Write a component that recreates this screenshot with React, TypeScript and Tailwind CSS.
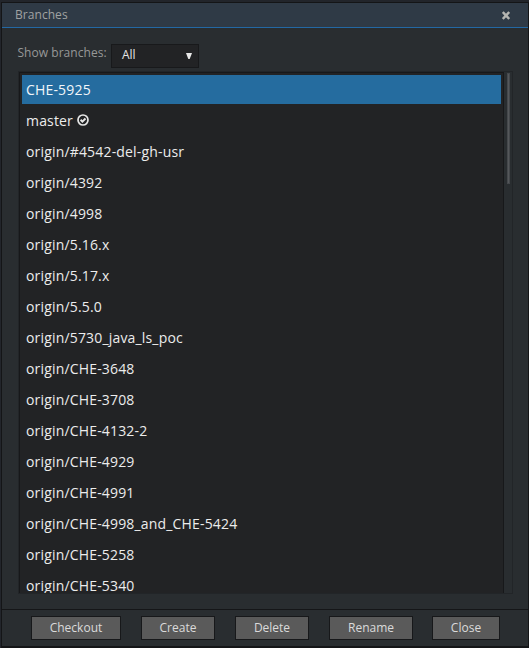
const branches = [
  'CHE-5925',
  'master',
  'origin/#4542-del-gh-usr',
  'origin/4392',
  'origin/4998',
  'origin/5.16.x',
  'origin/5.17.x',
  'origin/5.5.0',
  'origin/5730_java_ls_poc',
  'origin/CHE-3648',
  'origin/CHE-3708',
  'origin/CHE-4132-2',
  'origin/CHE-4929',
  'origin/CHE-4991',
  'origin/CHE-4998_and_CHE-5424',
  'origin/CHE-5258',
  'origin/CHE-5340',
];

const actions = [
  { label: 'Checkout', size: 'w-[90px] mr-5' },
  { label: 'Create', size: 'w-[74px] mr-5' },
  { label: 'Delete', size: 'w-[74px] mr-5' },
  { label: 'Rename', size: 'w-[84px] mr-[19px]' },
  { label: 'Close', size: 'w-[68px]' },
];

function CheckedOutIcon() {
  return (
    <svg className="ml-1 -mt-px h-3 w-3" viewBox="0 0 12 12" fill="none" stroke="#e6e6e6">
      <circle cx="6" cy="6" r="5" strokeWidth="1.7" />
      <path d="M3.6 5.8 5.4 7.6 8.5 4.5" strokeWidth="2" />
    </svg>
  );
}

function CloseIcon() {
  return (
    <svg className="h-[9px] w-2" viewBox="0 0 8 9" stroke="#b5b5b1" strokeWidth="2.4">
      <path d="M.8 1 7.2 8M7.2 1 .8 8" />
    </svg>
  );
}

export default function App() {
  return (
    <div className="h-[648px] w-[529px] overflow-hidden bg-[#22252b] pt-0.5 pl-px font-['Open_Sans',sans-serif]">
      <div className="flex h-[646px] flex-col border border-b-2 border-[#141517] bg-[#292d30]">
        <header className="flex h-[25px] shrink-0 items-center justify-between border-b border-[#2368a4] bg-[#2f3a46] pr-[18px] pl-[13px]">
          <span className="text-[12px] leading-6 tracking-[0.05px] text-[#a0a2a2]">Branches</span>
          <CloseIcon />
        </header>

        <main className="flex h-[581px] shrink-0 flex-col pt-4 pr-[15px] pl-4">
          <div className="flex h-[27px] shrink-0">
            <span className="-ml-[0.5px] w-[93.5px] whitespace-nowrap text-[12px] leading-[17px] tracking-[0.04px] text-[#979898]">
              Show branches:
            </span>
            <div className="flex h-6 w-[88px] items-center justify-between border border-[#18191b] bg-[#222325] pr-1.5 pl-2.5 text-[12px] text-[#e4e4e4]">
              <span className="pb-0.5 leading-5">All</span>
              <svg className="h-1.5 w-1.5" viewBox="0 0 6 6" fill="#e8e8e8">
                <path d="M0 0h6L3.7 6H2.3Z" />
              </svg>
            </div>
          </div>

          <div className="flex h-[523px] w-[495px] shrink-0 border border-[#222528]">
            <div className="w-[485px] overflow-hidden border border-b-0 border-[#17181a] bg-[#222325] pt-0.5 pl-0.5">
              {branches.map((name, i) => (
                <div
                  key={name}
                  className={`mb-0.5 flex h-[29px] w-[479px] items-center pl-1 text-[14px] leading-[29px] tracking-[0.17px] ${
                    i === 0 ? 'bg-[#256c9f] text-[#f2f6f9]' : 'text-[#ececec]'
                  }`}
                >
                  {name}
                  {name === 'master' && <CheckedOutIcon />}
                </div>
              ))}
            </div>
            <div className="flex-1 pt-px pl-[3px]">
              <div className="h-[111px] w-[3px] border border-[#45484c] bg-[#55585b]" />
            </div>
          </div>
        </main>

        <footer className="flex flex-1 border-t border-[#151618] pt-1.5 pl-[29px]">
          {actions.map(({ label, size }) => (
            <button
              key={label}
              className={`h-6 shrink-0 border border-[#17181a] bg-[#5a5a5a] pb-px text-[12px] leading-[21px] text-[#dadada] ${size}`}
            >
              {label}
            </button>
          ))}
        </footer>
      </div>
    </div>
  );
}
